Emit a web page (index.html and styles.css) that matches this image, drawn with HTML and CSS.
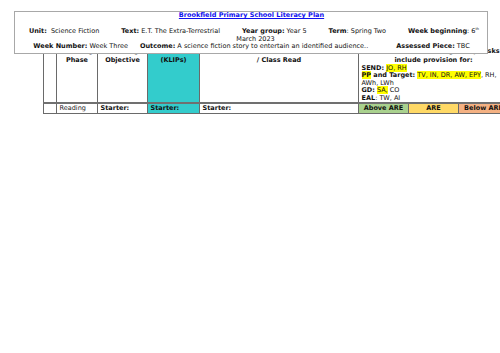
FILE: index.html
```html
<!DOCTYPE html>
<html>
<head>
<meta charset="utf-8">
<link rel="stylesheet" href="styles.css">
</head>
<body>
<div class="page">
  <div class="plan-header">
    <div class="title"><a href="#">Brookfield Primary School Literacy Plan</a></div>
    <div class="line line-a">
      <span class="f"><b>Unit:</b>&nbsp; Science Fiction</span>
      <span class="f"><b>Text:</b> E.T. The Extra-Terrestrial</span>
      <span class="f"><b>Year group:</b> Year 5</span>
      <span class="f"><b>Term</b>: Spring Two</span>
      <span class="f"><b>Week beginning</b>: 6<sup>th</sup></span>
    </div>
    <div class="line line-b">March 2023</div>
    <div class="line line-c">
      <span class="f"><b>Week Number:</b> Week Three</span>
      <span class="f f-out"><b>Outcome:</b> A science fiction story to entertain an identified audience..</span>
      <span class="f f-ass"><b>Assessed Piece:</b> TBC</span>
    </div>
  </div>

  <table class="plan">
    <colgroup>
      <col class="c-blank">
      <col class="c-phase">
      <col class="c-obj">
      <col class="c-klip">
      <col class="c-text">
      <col class="c-diff">
      <col class="c-diff">
      <col class="c-diff">
    </colgroup>
    <thead>
      <tr>
        <th></th>
        <th><div class="h1">Teaching</div><div>Phase</div></th>
        <th><div class="h1">Learning</div><div>Objective</div></th>
        <th class="teal"><div class="h1">Success Criteria</div><div>(KLIPs)</div></th>
        <th><div class="h1">Main Text</div><div>/ Class Read</div></th>
        <th colspan="3" class="prov">
          <div class="h1 nowrap">Differentiated Learning Group tasks</div>
          <div class="center">include provision for:</div>
          <div class="left"><b>SEND:</b> <span class="hl">JO, RH</span></div>
          <div class="left"><b><span class="hl">PP</span> and Target:</b> <span class="hl">TV, IN, DR, AW, EPY</span>, RH, AWh, LWh</div>
          <div class="left"><b>GD:</b> <span class="hl">SA,</span> CO</div>
          <div class="left"><b>EAL</b>: TW, AI</div>
        </th>
      </tr>
    </thead>
    <tbody>
      <tr>
        <td></td>
        <td class="light">Reading</td>
        <td><b>Starter:</b></td>
        <td class="teal"><b>Starter:</b></td>
        <td><b>Starter:</b></td>
        <td class="green center"><b>Above ARE</b></td>
        <td class="yellow center"><b>ARE</b></td>
        <td class="orange center nowrap"><b>Below ARE</b></td>
      </tr>
    </tbody>
  </table>
</div>
</body>
</html>
```

FILE: styles.css
```css
html, body {
  margin: 0;
  padding: 0;
  overflow: hidden;
  background: #fff;
}

body {
  width: 500px;
  height: 353px;
  font-family: "DejaVu Sans", Verdana, sans-serif;
  font-size: 6.5px;
  color: #111;
}

.page {
  position: relative;
  width: 500px;
  height: 353px;
  overflow: hidden;
}

/* header box overlaying the table */
.plan-header {
  position: absolute;
  left: 14px;
  top: 11px;
  width: 472px;
  height: 41px;
  border: 1px solid #a8a8a8;
  background: #fff;
  z-index: 2;
  padding-top: 0.25px;
  line-height: 7.5px;
}

.title {
  text-align: center;
  font-weight: bold;
  padding-left: 1px;
}

.title a {
  color: #1010ee;
  text-decoration: underline;
}

.line {
  white-space: nowrap;
}

.line-a {
  margin-top: 8.5px;
  display: flex;
  justify-content: center;
  gap: 22px;
  padding-left: 6px;
}

.line-b {
  text-align: center;
  padding-left: 9px;
}

.line-c {
  display: flex;
  justify-content: center;
  padding-left: 1px;
}

.f-out {
  margin-left: 12px;
}

.f-ass {
  margin-left: 28px;
}

sup {
  font-size: 3.5px;
  line-height: 0;
  vertical-align: 3px;
}

/* table */
.plan {
  position: relative;
  z-index: 1;
  margin: 48px 0 0 43px;
  border-collapse: collapse;
  table-layout: fixed;
  width: 465px;
}

.c-blank { width: 13px; }
.c-phase { width: 41px; }
.c-obj { width: 50px; }
.c-klip { width: 52px; }
.c-text { width: 159px; }
.c-diff { width: 50px; }

.plan th,
.plan td {
  border: 1px solid #6a6a6a;
  padding: 0 2.5px;
  line-height: 7.5px;
  overflow: visible;
}

.plan th {
  border-top: none;
  border-bottom: 2px solid #707070;
  vertical-align: top;
  text-align: center;
  font-weight: bold;
  height: 53px;
}

.plan th .h1 {
  margin-bottom: 1.5px;
  white-space: nowrap;
}

.plan td {
  height: 8.5px;
  line-height: 8.5px;
  text-align: left;
  white-space: nowrap;
  overflow: hidden;
  vertical-align: middle;
}

.plan th.prov {
  font-weight: normal;
}

.plan th.prov .h1,
.plan th.prov .center {
  font-weight: bold;
  text-align: center;
}

.plan th.prov .left {
  text-align: left;
}

.plan td.center {
  text-align: center;
}

.nowrap {
  white-space: nowrap;
}

.hl {
  background: #ffff00;
}

.light {
  color: #222;
}

.teal {
  background: #33cccc;
}

.green {
  background: #a9d18e;
}

.yellow {
  background: #ffd966;
}

.orange {
  background: #f4b183;
}
```
